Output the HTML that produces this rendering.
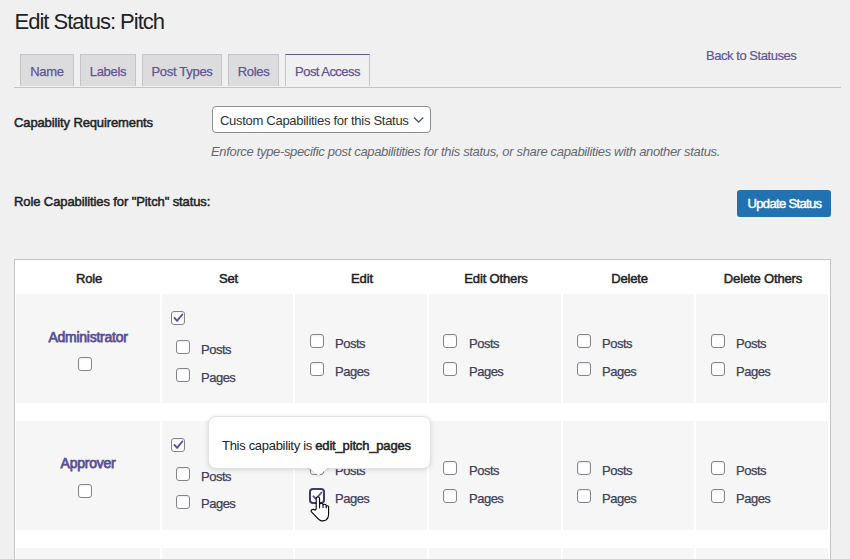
<!DOCTYPE html>
<html><head><meta charset="utf-8">
<style>
html,body{margin:0;padding:0;}
body{width:850px;height:559px;overflow:hidden;background:#f0f0f1;position:relative;font-family:"Liberation Sans",sans-serif;color:#1d2327;}
.a{position:absolute;white-space:nowrap;line-height:1;}
.tab{position:absolute;top:54px;height:32px;box-sizing:border-box;border:1px solid #c3c4c7;border-bottom:none;background:#dcdcde;}
.tab span{position:absolute;left:0;right:0;text-align:center;top:10px;font-size:13px;line-height:1;color:#5f5496;letter-spacing:-0.3px;-webkit-text-stroke:0.25px #5f5496;}
.tab.act{background:#f0f0f1;border-top:1px solid #655997;}
.cell{position:absolute;background:#f6f6f6;}
.cb{position:absolute;width:14px;height:14px;box-sizing:border-box;border:1px solid #82868c;border-radius:3px;background:#fff;box-shadow:inset 0 1px 2px rgba(0,0,0,0.08);}
.lbl{position:absolute;font-size:13px;line-height:1;color:#3c3f58;white-space:nowrap;letter-spacing:-0.5px;-webkit-text-stroke:0.25px #3c3f58;}
.hd{position:absolute;top:272.3px;font-size:13px;line-height:1;text-align:center;color:#1d2327;letter-spacing:-0.15px;-webkit-text-stroke:0.5px #1d2327;}
.role{position:absolute;font-size:14px;line-height:1;color:#5a4f95;text-align:center;letter-spacing:-0.25px;-webkit-text-stroke:0.75px #5a4f95;}
</style></head><body>

<div class="a" style="left:14.5px;top:11.4px;font-size:22px;letter-spacing:-1px;">Edit Status: Pitch</div>

<div class="tab" style="left:20px;width:54px;"><span>Name</span></div>
<div class="tab" style="left:80px;width:56px;"><span>Labels</span></div>
<div class="tab" style="left:142px;width:80px;"><span>Post Types</span></div>
<div class="tab" style="left:228px;width:51px;"><span>Roles</span></div>
<div class="tab act" style="left:285px;width:85px;"><span style="letter-spacing:-0.55px;">Post Access</span></div>
<div class="a" style="left:14px;top:87px;width:827px;height:1px;background:#c3c4c7;"></div>

<div class="a" style="left:706px;top:49px;font-size:13px;color:#5f5496;letter-spacing:-0.45px;-webkit-text-stroke:0.2px #5f5496;">Back to Statuses</div>

<div class="a" style="left:14px;top:116px;font-size:13px;letter-spacing:-0.12px;-webkit-text-stroke:0.5px #1d2327;">Capability Requirements</div>
<div class="a" style="left:212px;top:106px;width:219px;height:27px;box-sizing:border-box;border:1px solid #8c8f94;border-radius:4px;background:#fff;"></div>
<div class="a" style="left:220px;top:114px;font-size:13px;color:#2c3338;letter-spacing:-0.29px;">Custom Capabilities for this Status</div>
<svg class="a" style="left:412px;top:115px;" width="14" height="10" viewBox="0 0 14 10"><path d="M1.9 2.5 L6.7 7.1 L11.2 2.5" fill="none" stroke="#50575e" stroke-width="1.35"/></svg>

<div class="a" style="left:211px;top:145px;font-size:13px;font-style:italic;color:#646970;letter-spacing:-0.34px;">Enforce type-specific post capabilitities for this status, or share capabilities with another status.</div>

<div class="a" style="left:14px;top:195.2px;font-size:13px;letter-spacing:-0.1px;-webkit-text-stroke:0.5px #1d2327;">Role Capabilities for "Pitch" status:</div>

<div class="a" style="left:737px;top:190px;width:94px;height:27px;background:#2271b1;border-radius:3px;"></div>
<div class="a" style="left:737.5px;top:197.4px;width:94px;text-align:center;font-size:13px;color:#fff;letter-spacing:-0.65px;-webkit-text-stroke:0.45px #fff;">Update Status</div>

<!-- table -->
<div class="a" style="left:14px;top:259px;width:817px;height:400px;box-sizing:border-box;border:1px solid #c3c4c7;background:#fff;"></div>
<div class="hd" style="left:17px;width:144px;">Role</div>
<div class="hd" style="left:163px;width:131px;">Set</div>
<div class="hd" style="left:296px;width:132px;">Edit</div>
<div class="hd" style="left:430px;width:132px;">Edit Others</div>
<div class="hd" style="left:564px;width:131px;">Delete</div>
<div class="hd" style="left:697px;width:132px;">Delete Others</div>

<div class="cell" style="left:16px;top:294px;width:144px;height:109px;"></div>
<div class="cell" style="left:162px;top:294px;width:131px;height:109px;"></div>
<div class="cell" style="left:295px;top:294px;width:132px;height:109px;"></div>
<div class="cell" style="left:429px;top:294px;width:132px;height:109px;"></div>
<div class="cell" style="left:563px;top:294px;width:131px;height:109px;"></div>
<div class="cell" style="left:696px;top:294px;width:132px;height:109px;"></div>
<div class="cell" style="left:16px;top:421px;width:144px;height:109px;"></div>
<div class="cell" style="left:162px;top:421px;width:131px;height:109px;"></div>
<div class="cell" style="left:295px;top:421px;width:132px;height:109px;"></div>
<div class="cell" style="left:429px;top:421px;width:132px;height:109px;"></div>
<div class="cell" style="left:563px;top:421px;width:131px;height:109px;"></div>
<div class="cell" style="left:696px;top:421px;width:132px;height:109px;"></div>
<div class="cell" style="left:16px;top:548px;width:144px;height:109px;"></div>
<div class="cell" style="left:162px;top:548px;width:131px;height:109px;"></div>
<div class="cell" style="left:295px;top:548px;width:132px;height:109px;"></div>
<div class="cell" style="left:429px;top:548px;width:132px;height:109px;"></div>
<div class="cell" style="left:563px;top:548px;width:131px;height:109px;"></div>
<div class="cell" style="left:696px;top:548px;width:132px;height:109px;"></div>
<div class="role" style="left:16px;width:144px;top:329.6px;">Administrator</div>
<div class="cb" style="left:78px;top:357px;"></div>
<div class="cb" style="left:171px;top:311px;"></div><svg class="a" style="left:171px;top:311px;" width="14" height="14" viewBox="0 0 14 14"><path d="M3.5 6.9 L6.1 9.9 L11.3 3.5" fill="none" stroke="#5d50a3" stroke-width="1.9" stroke-linecap="round" stroke-linejoin="round"/></svg>
<div class="cb" style="left:176px;top:340px;"></div>
<div class="cb" style="left:176px;top:368px;"></div>
<div class="lbl" style="left:201px;top:343px;">Posts</div>
<div class="lbl" style="left:201px;top:371.0px;">Pages</div>
<div class="cb" style="left:310px;top:334px;"></div>
<div class="cb" style="left:310px;top:362px;"></div>
<div class="lbl" style="left:335px;top:337px;">Posts</div>
<div class="lbl" style="left:335px;top:365px;">Pages</div>
<div class="cb" style="left:443px;top:334px;"></div>
<div class="cb" style="left:443px;top:362px;"></div>
<div class="lbl" style="left:469px;top:337px;">Posts</div>
<div class="lbl" style="left:469px;top:365px;">Pages</div>
<div class="cb" style="left:577px;top:334px;"></div>
<div class="cb" style="left:577px;top:362px;"></div>
<div class="lbl" style="left:602px;top:337px;">Posts</div>
<div class="lbl" style="left:602px;top:365px;">Pages</div>
<div class="cb" style="left:711px;top:334px;"></div>
<div class="cb" style="left:711px;top:362px;"></div>
<div class="lbl" style="left:736px;top:337px;">Posts</div>
<div class="lbl" style="left:736px;top:365px;">Pages</div>
<div class="role" style="left:16px;width:144px;top:455.6px;">Approver</div>
<div class="cb" style="left:78px;top:484px;"></div>
<div class="cb" style="left:171px;top:438px;"></div><svg class="a" style="left:171px;top:438px;" width="14" height="14" viewBox="0 0 14 14"><path d="M3.5 6.9 L6.1 9.9 L11.3 3.5" fill="none" stroke="#5d50a3" stroke-width="1.9" stroke-linecap="round" stroke-linejoin="round"/></svg>
<div class="cb" style="left:176px;top:467px;"></div>
<div class="cb" style="left:176px;top:495px;"></div>
<div class="lbl" style="left:201px;top:470px;">Posts</div>
<div class="lbl" style="left:201px;top:497.4px;">Pages</div>
<div class="cb" style="left:310px;top:461px;"></div>
<div class="lbl" style="left:335px;top:464px;">Posts</div>
<div class="lbl" style="left:335px;top:492px;">Pages</div>
<div class="cb" style="left:443px;top:461px;"></div>
<div class="cb" style="left:443px;top:489px;"></div>
<div class="lbl" style="left:469px;top:464px;">Posts</div>
<div class="lbl" style="left:469px;top:492px;">Pages</div>
<div class="cb" style="left:577px;top:461px;"></div>
<div class="cb" style="left:577px;top:489px;"></div>
<div class="lbl" style="left:602px;top:464px;">Posts</div>
<div class="lbl" style="left:602px;top:492px;">Pages</div>
<div class="cb" style="left:711px;top:461px;"></div>
<div class="cb" style="left:711px;top:489px;"></div>
<div class="lbl" style="left:736px;top:464px;">Posts</div>
<div class="lbl" style="left:736px;top:492px;">Pages</div>

<!-- focused checkbox -->
<div class="a" style="left:309px;top:488px;width:16px;height:16px;box-sizing:border-box;border:2px solid #3b3d68;border-radius:4px;background:#fff;"></div>
<svg class="a" style="left:309px;top:488px;" width="16" height="16" viewBox="0 0 16 16"><path d="M4.3 8.3 L7 10.8 L12.4 4.6" fill="none" stroke="#655997" stroke-width="1.9" stroke-linecap="round" stroke-linejoin="round"/></svg>

<!-- tooltip -->
<div class="a" style="left:207.5px;top:416px;width:223.5px;height:52.5px;box-sizing:border-box;background:#fff;border:1px solid #e2e2e4;border-radius:8px;box-shadow:0 1px 5px rgba(0,0,0,0.13);"></div>
<svg class="a" style="left:300px;top:455px;" width="40" height="30" viewBox="300 455 40 30"><defs><filter id="ds" x="-50%" y="-50%" width="200%" height="200%"><feDropShadow dx="0" dy="1" stdDeviation="1.2" flood-color="#000" flood-opacity="0.18"/></filter></defs><path d="M307,466 L330,466 L318.5,475.6 Z" fill="#fff" filter="url(#ds)"/></svg>
<div class="a" style="left:303px;top:455px;width:31px;height:12px;background:#fff;"></div>
<div class="a" style="left:222px;top:439px;font-size:13px;color:#1d2327;letter-spacing:-0.3px;">This capability is <span style="letter-spacing:-0.17px;-webkit-text-stroke:0.5px #1d2327;">edit_pitch_pages</span></div>

<!-- cursor -->
<svg class="a" style="left:306px;top:486px;" width="28" height="38" viewBox="0 0 28 38"><path d="M10.2,23 L10.2,12.7 A1.7,1.7 0 0 1 13.6,12.7 L13.6,18.9 A1.7,1.7 0 0 1 17,18.9 L17,19.8 A1.6,1.6 0 0 1 20.2,19.8 L20.2,20.9 A1.2,1.2 0 0 1 22.6,20.9 L22.6,28.3 C22.6,30.8 21.8,32.6 20.3,33.8 C18.9,34.8 16.6,35 14.9,34.6 C13.6,34.2 12.6,33.4 11.7,32.4 L5.5,25.9 Q4.6,24.6 5.9,23.8 Q7.5,22.9 9,24.2 Z" fill="#fff" stroke="#000" stroke-width="1.1" stroke-linejoin="round"/><path d="M13.6,18.9 L13.6,22.5 M17,19.8 L17,22 M20.2,20.9 L20.2,22.3" stroke="#000" stroke-width="1" fill="none"/></svg>

</body></html>
